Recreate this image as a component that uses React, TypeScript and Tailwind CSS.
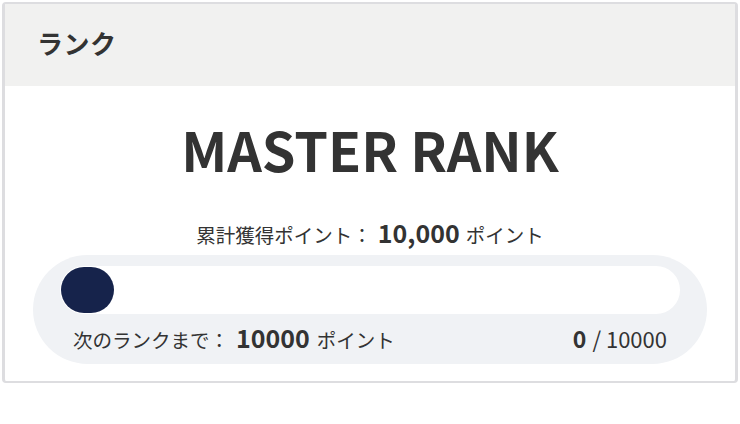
export default function App() {
  return (
    <div
      className="w-[740px] h-[424px] bg-white pt-[2px] px-[1px]"
      style={{ fontFamily: '"Noto Sans CJK JP", "Noto Sans", sans-serif' }}
    >
      <div className="w-[736px] h-[381px] mx-auto border-x-[3px] border-y-2 border-[#dddde0] rounded-[4px] bg-white overflow-hidden text-[#333333]">
        <div className="h-[82px] bg-[#f1f1f0] flex items-center pl-[32px] pb-[4px]">
          <h2 className="text-[26px] font-bold leading-none tracking-[0.02em]">ランク</h2>
        </div>
        <div className="flex flex-col items-center">
          <h1 className="mt-[36px] text-[54px] font-bold leading-none">MASTER RANK</h1>
          <p className="mt-[44px] text-[19.5px] leading-none flex items-baseline">
            累計獲得ポイント：
            <span className="ml-[6px] mr-[6px] text-[25px] font-bold">10,000</span>
            ポイント
          </p>
        </div>
        <div className="mt-[10px] mx-[28px] h-[109px] rounded-full bg-[#f0f2f5] pt-[11px] pl-[27px] pr-[27px]">
          <div className="h-[48px] rounded-full bg-white flex items-center px-[1px]">
            <div className="w-[53px] h-[46px] rounded-full bg-[#16234b]" />
          </div>
          <div className="mt-[11px] flex items-baseline justify-between pl-[13px] pr-[13px]">
            <p className="text-[19.5px] leading-none flex items-baseline">
              次のランクまで：
              <span className="ml-[7px] mr-[7px] text-[25px] font-bold">10000</span>
              ポイント
            </p>
            <p className="text-[22px] leading-none flex items-baseline">
              <span className="text-[23px] font-bold mr-[6px]">0</span>/ 10000
            </p>
          </div>
        </div>
      </div>
    </div>
  );
}
